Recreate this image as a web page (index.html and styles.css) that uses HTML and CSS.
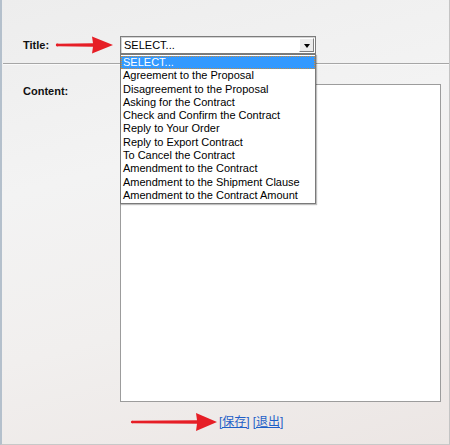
FILE: index.html
```html
<!DOCTYPE html>
<html>
<head>
<meta charset="utf-8">
<link rel="stylesheet" href="styles.css">
</head>
<body>
<div class="page">
  <div class="row title-row">
    <div class="label-col">
      <span class="label">Title:</span>
      <svg class="arrow-title" width="60" height="20" viewBox="0 0 60 20">
        <polygon points="2,8.7 38,8.2 37,1.5 58,10 37,18.5 38,11.8 2,11.3" fill="#e61e26"/>
        <circle cx="2.2" cy="10" r="1.4" fill="#e61e26"/>
      </svg>
    </div>
    <div class="select-wrap">
      <div class="select">
        <span class="select-text">SELECT...</span>
        <span class="select-btn"><span class="tri"></span></span>
      </div>
      <ul class="options">
        <li class="opt active">SELECT...</li>
        <li class="opt">Agreement to the Proposal</li>
        <li class="opt">Disagreement to the Proposal</li>
        <li class="opt">Asking for the Contract</li>
        <li class="opt">Check and Confirm the Contract</li>
        <li class="opt">Reply to Your Order</li>
        <li class="opt">Reply to Export Contract</li>
        <li class="opt">To Cancel the Contract</li>
        <li class="opt">Amendment to the Contract</li>
        <li class="opt">Amendment to the Shipment Clause</li>
        <li class="opt">Amendment to the Contract Amount</li>
      </ul>
    </div>
  </div>
  <div class="divider"></div>
  <div class="row content-row">
    <div class="label-col"><span class="label">Content:</span></div>
    <textarea class="content-box" readonly></textarea>
  </div>
  <div class="footer">
    <svg class="arrow-foot" width="88" height="20" viewBox="0 0 88 20">
      <polygon points="2,8.8 67,8.2 66,1 87,10 66,19 67,11.8 2,11.2" fill="#e61e26"/>
      <circle cx="2.2" cy="10" r="1.3" fill="#e61e26"/>
    </svg>
    <a class="link" href="#">[保存]</a>
    <a class="link" href="#">[退出]</a>
  </div>
</div>
</body>
</html>
```
FILE: styles.css
```css
html, body {
  margin: 0;
  padding: 0;
}
body {
  width: 450px;
  height: 445px;
  overflow: hidden;
  font-family: "Liberation Sans", "Noto Sans CJK SC", Arial, sans-serif;
}
.page {
  box-sizing: border-box;
  width: 450px;
  height: 445px;
  padding-top: 36px;
  border-left: 2px solid #b4c0cc;
  border-right: 1px solid #c4c4c4;
  border-bottom: 1px solid #c8c8c8;
  background: linear-gradient(165deg, #ededed 0%, #f3f3f3 35%, #f1efee 65%, #ece6e4 100%);
  position: relative;
}
.row {
  display: flex;
  padding-left: 20px;
}
.label-col {
  width: 98px;
  display: flex;
  align-items: center;
  flex-shrink: 0;
}
.label {
  font-weight: bold;
  font-size: 11px;
  line-height: 13px;
  color: #111;
  width: 33px;
  padding-left: 1px;
  box-sizing: border-box;
  white-space: nowrap;
}
.title-row {
  height: 18px;
  align-items: center;
}
.arrow-title {
  display: block;
}
.select-wrap {
  position: relative;
}
.select {
  box-sizing: border-box;
  width: 196px;
  height: 18px;
  border: 1px solid #7c7c7c;
  box-shadow: inset 1px 1px 0 #d4d4d4;
  background: #fff;
  display: flex;
  align-items: center;
  justify-content: space-between;
  padding-left: 3px;
  padding-right: 1px;
}
.select-text {
  font-size: 11px;
  line-height: 13px;
  color: #000;
}
.select-btn {
  box-sizing: border-box;
  width: 15px;
  height: 14px;
  background: #ececec;
  border-top: 1px solid #fff;
  border-left: 1px solid #fff;
  border-right: 1px solid #808080;
  border-bottom: 1px solid #808080;
  display: flex;
  align-items: center;
  justify-content: center;
}
.tri {
  width: 0;
  height: 0;
  border-left: 3.5px solid transparent;
  border-right: 3.5px solid transparent;
  border-top: 4px solid #000;
  margin-top: 1px;
}
.options {
  position: absolute;
  left: 0;
  top: 18px;
  box-sizing: border-box;
  width: 196px;
  margin: 0;
  padding: 1px 0;
  list-style: none;
  background: #fff;
  border: 1px solid #7a7a7a;
  box-shadow: 1px 1px 1px rgba(0,0,0,0.25);
  z-index: 2;
}
.opt {
  font-size: 11px;
  line-height: 13.3px;
  height: 13.3px;
  padding-left: 2px;
  color: #000;
  white-space: nowrap;
}
.opt.active {
  background: #3399ff;
  color: #fff;
  outline: 1px dotted #c88a40;
  outline-offset: -1px;
}
.divider {
  margin-top: 9px;
  margin-left: 1px;
  height: 1px;
  background: #a6a6a6;
  border-bottom: 1px solid #fafafa;
}
.content-row {
  margin-top: 19px;
  align-items: flex-start;
}
.content-row .label-col {
  height: 13px;
  margin-top: 1px;
}
.content-row .label {
  width: auto;
}
.content-box {
  box-sizing: border-box;
  margin: 0;
  width: 321px;
  height: 318px;
  border: 1px solid #9c9c9c;
  background: #fff;
  resize: none;
  padding: 0;
  outline: none;
  display: block;
}
.footer {
  display: flex;
  align-items: center;
  height: 20px;
  margin-top: 10px;
  padding-left: 128px;
}
.arrow-foot {
  display: block;
  margin-right: 1px;
}
.link {
  font-size: 12px;
  line-height: 14px;
  color: #1f5fc7;
  text-decoration: underline;
  margin-right: 3px;
}
```
